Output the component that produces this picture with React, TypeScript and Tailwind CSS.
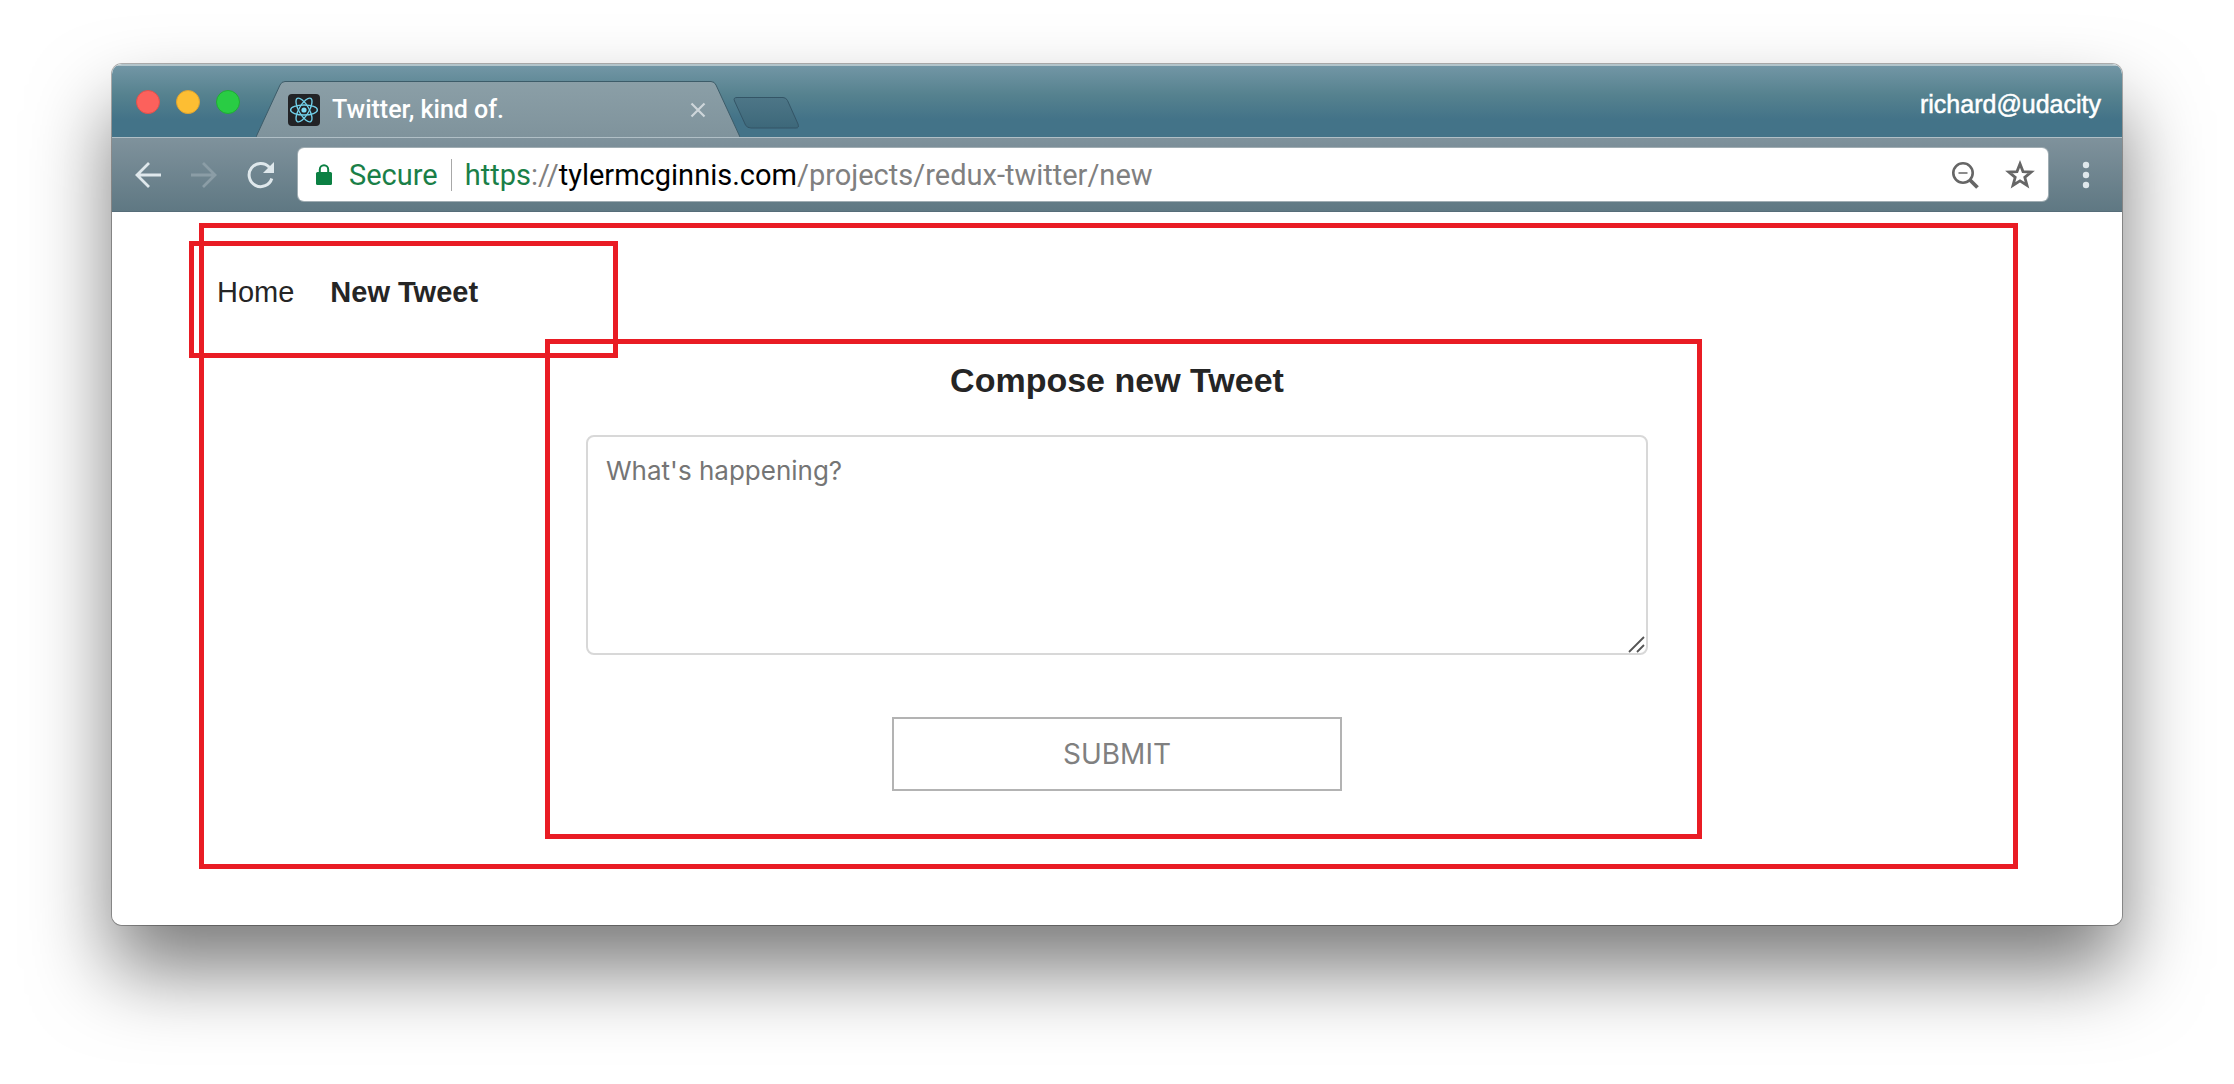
import React from "react";

const annotation = "pointer-events-none absolute border-[5px] border-[#e91c24]";

function ReactLogo() {
  return (
    <svg viewBox="0 0 32 32" className="size-8" aria-hidden="true">
      <rect width="32" height="32" rx="4" fill="#222326" />
      <circle cx="16" cy="16" r="2.6" fill="#7fdcf5" />
      <g fill="none" stroke="#71cfe8" strokeWidth="1.4">
        <ellipse cx="16" cy="16" rx="13.4" ry="5" />
        <ellipse cx="16" cy="16" rx="13.4" ry="5" transform="rotate(60 16 16)" />
        <ellipse cx="16" cy="16" rx="13.4" ry="5" transform="rotate(120 16 16)" />
      </g>
    </svg>
  );
}

function TabStrip() {
  return (
    <div className="flex h-[73px] items-end justify-between border-t-2 border-[#b3c5cb] bg-linear-to-b from-[#7296a5] via-[#56828f] via-40% to-[#437388] to-75%">
      <div className="flex h-full items-end">
        <div className="flex gap-4 self-center pl-6">
          <button aria-label="Close window" className="size-6 rounded-full border border-[#e2504a] bg-[#fc615c]" />
          <button aria-label="Minimize window" className="size-6 rounded-full border border-[#dfa32f] bg-[#fdbe33]" />
          <button aria-label="Zoom window" className="size-6 rounded-full border border-[#20ac34] bg-[#29cc44]" />
        </div>
        <div className="relative ml-4 flex h-14 w-[484px] items-center">
          <svg viewBox="0 0 484 56" className="absolute inset-0 size-full" aria-hidden="true">
            <defs>
              <linearGradient id="tab" x1="0" x2="0" y1="0" y2="1">
                <stop offset="0" stopColor="#8b9fa7" />
                <stop offset="1" stopColor="#7f939c" />
              </linearGradient>
            </defs>
            <path d="M0 56 L24 4 Q25.500 .5 29 .5 H455 Q458.500 .5 460 4 L484 56 Z" fill="url(#tab)" />
            <path d="M0 56 L24 4 Q25.500 .5 29 .5 H455 Q458.500 .5 460 4 L484 56" fill="none" stroke="#3d5c69" />
          </svg>
          <div className="relative flex w-full items-center pt-px pr-[34px] pl-8">
            <ReactLogo />
            <span className="grow pl-3 font-['Roboto',sans-serif] text-[25px] leading-8 font-medium text-white">Twitter, kind of.</span>
            <button aria-label="Close tab" className="text-[#ced6da]">
              <svg viewBox="0 0 16 16" className="size-4" fill="none" stroke="currentColor" strokeWidth="2.200">
                <path d="M1.500 1.500 14.500 14.500 M14.500 1.500 1.500 14.500" />
              </svg>
            </button>
          </div>
        </div>
        <button aria-label="New tab" className="-ml-2 mb-[7px]">
          <svg viewBox="0 0 68 34" className="h-[34px] w-[68px]">
            <defs>
              <linearGradient id="newtab" x1="0" x2="0" y1="0" y2="1">
                <stop offset="0" stopColor="#4d7687" />
                <stop offset="1" stopColor="#3d687a" />
              </linearGradient>
            </defs>
            <path d="M5 1.500 H51 Q54 1.500 55.500 4.500 L66 28 Q67.500 32 64 32 H19 Q15 32 13.500 29 L2.500 5 Q1 1.500 5 1.500 Z" fill="url(#newtab)" stroke="#345566" />
          </svg>
        </button>
      </div>
      <button className="self-center pt-1 pr-[21px] font-['Liberation_Sans',sans-serif] text-[25px] leading-8 text-white [-webkit-text-stroke:0.500px_white]">
        richard@udacity
      </button>
    </div>
  );
}

function Toolbar() {
  return (
    <div className="flex h-[75px] items-center border-t border-b border-t-[#b0bfc6] border-b-[#566d79] bg-linear-to-b from-[#7f929c] to-[#5f7883] pl-[23px] text-[#dfe8ec]">
      <button aria-label="Back">
        <svg viewBox="0 0 26 26" className="size-[26px]" fill="none" stroke="currentColor" strokeWidth="2.800">
          <path d="M26 13 H2 M14 1 2 13 14 25" />
        </svg>
      </button>
      <button aria-label="Forward" className="ml-[30px] text-[#8b9da6]">
        <svg viewBox="0 0 26 26" className="size-[26px]" fill="none" stroke="currentColor" strokeWidth="2.800">
          <path d="M0 13 H24 M12 1 24 13 12 25" />
        </svg>
      </button>
      <button aria-label="Reload" className="ml-[30px]">
        <svg viewBox="0 0 28 28" className="size-7">
          <path d="M22.300 6.200 A11.600 11.600 0 1 0 24.800 17.500" fill="none" stroke="currentColor" strokeWidth="3" />
          <path d="M27 1 V12 H16 Z" fill="currentColor" />
        </svg>
      </button>
      <div className="ml-[23px] flex h-[53px] grow items-center rounded-md bg-white pr-3 pl-[17px] font-['Roboto',sans-serif] text-[29px] leading-9 text-[#808080] shadow-[0_0_0_1px_#a0adb3]">
        <svg viewBox="0 0 18 22" className="h-[22px] w-[18px] shrink-0" aria-hidden="true">
          <rect x="1" y="8" width="16" height="13" rx="1.500" fill="#0b8043" />
          <path d="M4.800 9 V5.500 a4.200 4.200 0 0 1 8.400 0 V9" fill="none" stroke="#0b8043" strokeWidth="2" />
        </svg>
        <span className="pl-4 text-[#1a7f48]">Secure</span>
        <span className="mx-[13px] h-8 w-px shrink-0 bg-[#a8a8a8]" />
        <div className="grow whitespace-nowrap">
          <span className="text-[#1a7f48]">https</span>://<span className="text-black">tylermcginnis.com</span>/projects/redux-twitter/new
        </div>
        <button aria-label="Zoom level" className="mr-6 text-[#666]">
          <svg viewBox="0 0 30 30" className="size-[30px]" fill="none" stroke="currentColor">
            <circle cx="13" cy="13" r="9.700" strokeWidth="2.600" />
            <path d="M8.500 13 H17.500" strokeWidth="1.600" />
            <path d="M20 20 27.500 27.500" strokeWidth="3.800" />
          </svg>
        </button>
        <button aria-label="Bookmark this page" className="text-[#666]">
          <svg viewBox="0 0 32 32" className="size-8" fill="none" stroke="currentColor" strokeWidth="2.800">
            <path d="M16 4.800 L19 12.600 27.200 13 20.800 18.300 23 26.300 16 21.800 9 26.300 11.200 18.300 4.800 13 13 12.600 Z" />
          </svg>
        </button>
      </div>
      <button aria-label="Menu" className="mr-[30px] ml-8">
        <svg viewBox="0 0 12 28" className="h-7 w-3" fill="currentColor">
          <circle cx="6" cy="4" r="3.200" />
          <circle cx="6" cy="14" r="3.200" />
          <circle cx="6" cy="24" r="3.200" />
        </svg>
      </button>
    </div>
  );
}

function ComposeForm() {
  return (
    <form className="mx-auto flex w-[1062px] max-w-full flex-col items-center" onSubmit={(e) => e.preventDefault()}>
      <h1 className="text-[34px] leading-10 font-bold">Compose new Tweet</h1>
      <div className="relative mt-[35px] h-[220px] w-full">
        <textarea
          aria-label="Tweet text"
          placeholder="What's happening?"
          className="block size-full resize-none rounded-lg border-2 border-[#d8d8d8] bg-white px-[18px] py-4 font-['Inter',sans-serif] text-[26px] leading-9 placeholder:text-[#757575]"
        />
        <svg viewBox="0 0 18 18" className="absolute right-[2px] bottom-[2px] size-[18px]" stroke="#555" strokeWidth="1.800" aria-hidden="true">
          <path d="M1 17 16 2 M9 17 16 10" />
        </svg>
      </div>
      <button type="submit" className="mt-[62px] h-[74px] w-[450px] border-2 border-[#b3b3b3] font-['Inter',sans-serif] text-[28px] text-[#808080]">
        SUBMIT
      </button>
    </form>
  );
}

export default function App() {
  return (
    <div className="min-h-screen bg-white px-28 pt-16 pb-40">
      <div className="rounded-[10px] shadow-[0_0_0_1px_rgba(0,0,0,0.300),0_45px_80px_rgba(0,0,0,0.520)]">
        <div className="overflow-hidden rounded-[10px] bg-white">
          <TabStrip />
          <Toolbar />
          <main className="px-[104px] pt-[11px] pb-14 font-['Liberation_Sans',sans-serif] text-[#252525]">
            <div className="relative pb-[78px]">
              <nav className="relative pt-[49px] pb-[68px]">
                <div className="flex gap-9 pl-px text-[29px] leading-10">
                  <a href="#home">Home</a>
                  <a href="#new" className="font-bold">New Tweet</a>
                </div>
                <div className={`${annotation} top-[18px] -left-[27px] h-[117px] w-[429px]`} />
              </nav>
              <section className="relative -mt-5">
                <ComposeForm />
                <div className={`${annotation} -top-[21px] right-[316px] -bottom-12 left-[329px]`} />
              </section>
              <div className={`${annotation} inset-y-0 right-0 -left-[17px]`} />
            </div>
          </main>
        </div>
      </div>
    </div>
  );
}
